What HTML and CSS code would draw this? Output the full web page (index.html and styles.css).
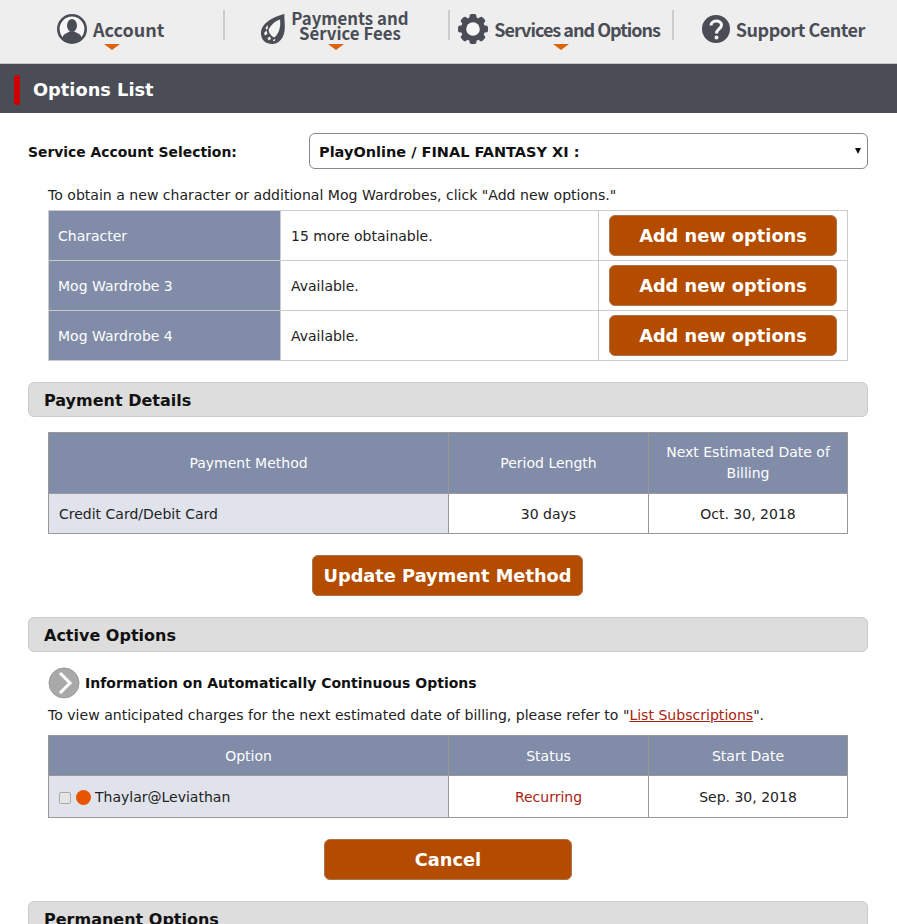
FILE: index.html
```html
<!DOCTYPE html>
<html lang="en">
<head>
    <meta charset="UTF-8">
    <meta name="viewport" content="width=device-width, initial-scale=1.0">
    <title>Options List</title>
    <link rel="stylesheet" href="styles.css">
</head>
<body>

<nav class="topnav">
    <a class="nav-item has-arrow">
        <svg class="nav-icon" width="30" height="30" viewBox="0 0 30 30">
            <circle cx="15" cy="15" r="13.700" fill="#f6f6f6" stroke="#4a4d55" stroke-width="2.600"/>
            <ellipse cx="15" cy="11.500" rx="5" ry="6.500" fill="#4a4d55"/>
            <path d="M5.500 24c.5-3 2-4 4.500-5l2.500-1.500h5L20 19c2.500 1 4 2 4.500 5a12 12 0 0 1-19 0z" fill="#4a4d55"/>
        </svg>
        <span>Account</span>
    </a>
    <a class="nav-item has-arrow">
        <svg class="nav-icon" width="24" height="30" viewBox="0 0 24 30">
            <path d="M23.500 0c-.5 3 .5 8 .3 14C23.500 24 18 30 11 30 5 30 0 26 0 19.500 0 9 12 3 23.500 0z" fill="#4a4d55"/>
            <path d="M19 5.500c1 7-1 14-5.500 18-3-1-5.500-4-6-7.500 2-5 6.500-9 11.500-10.500z" fill="#f2f2f2"/>
            <path d="M3 19l2.500-2.500 1 3.500-2.500 1.500zM6.500 24l2.500-1.500 1 2.500-2.500 1.500zM11.500 26l3-1-1 2.500zM4.500 14l2-3 .5 3-1.500 2z" fill="#f2f2f2"/>
        </svg>
        <span class="nav-two">Payments and<br>Service Fees</span>
    </a>
    <a class="nav-item has-arrow">
        <svg class="nav-icon" width="30" height="30" viewBox="0 0 30 30">
            <g fill="#4a4d55">
                <circle cx="15" cy="15" r="12"/>
                <rect x="11.500" y="0" width="7" height="6" rx="2"/>
                <rect x="11.500" y="0" width="7" height="6" rx="2" transform="rotate(45 15 15)"/>
                <rect x="11.500" y="0" width="7" height="6" rx="2" transform="rotate(90 15 15)"/>
                <rect x="11.500" y="0" width="7" height="6" rx="2" transform="rotate(135 15 15)"/>
                <rect x="11.500" y="0" width="7" height="6" rx="2" transform="rotate(180 15 15)"/>
                <rect x="11.500" y="0" width="7" height="6" rx="2" transform="rotate(225 15 15)"/>
                <rect x="11.500" y="0" width="7" height="6" rx="2" transform="rotate(270 15 15)"/>
                <rect x="11.500" y="0" width="7" height="6" rx="2" transform="rotate(315 15 15)"/>
            </g>
            <circle cx="15" cy="15" r="6.800" fill="#f6f6f6"/>
        </svg>
        <span class="nav-tight">Services and Options</span>
    </a>
    <a class="nav-item">
        <svg class="nav-icon" width="28" height="28" viewBox="0 0 28 28">
            <circle cx="14" cy="14" r="14" fill="#4a4d55"/>
            <path d="M9 10.500C9 4.500 19.500 4.500 19.500 10c0 4-5 4-5 8.500" fill="none" stroke="#f6f6f6" stroke-width="3"/>
            <circle cx="14.500" cy="22.500" r="2" fill="#f6f6f6"/>
        </svg>
        <span class="nav-support">Support Center</span>
    </a>
</nav>

<h1 class="page-title"><span class="title-mark"></span>Options List</h1>

<main class="content">
    <div class="account-row">
        <label class="account-label">Service Account Selection:</label>
        <div class="fake-select">PlayOnline / FINAL FANTASY XI :<span class="select-arrow"></span></div>
    </div>

    <p class="note">To obtain a new character or additional Mog Wardrobes, click "Add new options."</p>
    <table class="grid options-table">
        <tr>
            <th class="left">Character</th>
            <td>15 more obtainable.</td>
            <td class="btn-cell"><a class="btn btn-add">Add new options</a></td>
        </tr>
        <tr>
            <th class="left">Mog Wardrobe 3</th>
            <td>Available.</td>
            <td class="btn-cell"><a class="btn btn-add">Add new options</a></td>
        </tr>
        <tr>
            <th class="left">Mog Wardrobe 4</th>
            <td>Available.</td>
            <td class="btn-cell"><a class="btn btn-add">Add new options</a></td>
        </tr>
    </table>

    <h2 class="section-head">Payment Details</h2>
    <table class="grid wide-table payment-table">
        <tr class="head-row">
            <th>Payment Method</th>
            <th>Period Length</th>
            <th>Next Estimated Date of Billing</th>
        </tr>
        <tr class="body-row">
            <td class="shaded">Credit Card/Debit Card</td>
            <td class="center">30 days</td>
            <td class="center">Oct. 30, 2018</td>
        </tr>
    </table>
    <div class="btn-wrap"><a class="btn btn-update">Update Payment Method</a></div>

    <h2 class="section-head">Active Options</h2>
    <div class="info-link">
        <svg width="32" height="32" viewBox="0 0 32 32">
            <circle cx="16" cy="16" r="15" fill="#a9a9a9" stroke="#999"/>
            <path d="M12 6l10 10-10 10" fill="none" stroke="#fff" stroke-width="3"/>
        </svg>
        <span>Information on Automatically Continuous Options</span>
    </div>
    <p class="note charges">To view anticipated charges for the next estimated date of billing, please refer to "<a class="red-link">List Subscriptions</a>".</p>
    <table class="grid wide-table active-table">
        <tr class="head-row">
            <th>Option</th>
            <th>Status</th>
            <th>Start Date</th>
        </tr>
        <tr class="body-row">
            <td class="shaded"><span class="option-cell"><input type="checkbox" class="opt-check" disabled><span class="dot"></span>Thaylar@Leviathan</span></td>
            <td class="center recurring">Recurring</td>
            <td class="center">Sep. 30, 2018</td>
        </tr>
    </table>
    <div class="btn-wrap"><a class="btn btn-cancel">Cancel</a></div>

    <h2 class="section-head">Permanent Options</h2>
</main>

</body>
</html>
```

FILE: styles.css
```css
html, body {
    height: 924px;
    overflow: hidden;
}

body {
    margin: 0;
    background-color: white;
    color: #222;
    font-family: "DejaVu Sans", Verdana, sans-serif;
    font-size: 14px;
}

.topnav {
    display: flex;
    height: 63px;
    background-color: #eeeeee;
    border-bottom: 1px solid #c4c4c4;
}

.nav-item {
    position: relative;
    flex: 1;
    display: flex;
    align-items: center;
    justify-content: center;
    gap: 6px;
    box-sizing: border-box;
    height: 58px;
    padding-right: 3px;
    color: #4a4d55;
    font-family: "Noto Sans CJK JP", "Noto Sans", sans-serif;
    font-size: 18px;
    font-weight: 700;
}

.nav-item + .nav-item::before {
    content: "";
    position: absolute;
    left: -1px;
    top: 10px;
    width: 2px;
    height: 30px;
    background-color: #cccccc;
}

.has-arrow::after {
    content: "";
    position: absolute;
    left: 50%;
    top: 44px;
    margin-left: -8px;
    border-top: 6px solid #d9640b;
    border-left: 8px solid transparent;
    border-right: 8px solid transparent;
}

.nav-two {
    margin-bottom: 7px;
    font-size: 16.8px;
    line-height: 15px;
    text-align: center;
}

.nav-tight {
    letter-spacing: -1px;
}

.nav-support {
    letter-spacing: -0.5px;
}

.page-title {
    display: flex;
    align-items: center;
    box-sizing: border-box;
    height: 49px;
    margin: 0;
    padding: 2px 0 0 14px;
    background-color: #4a4d55;
    color: white;
    font-size: 17.8px;
    font-weight: bold;
}

.title-mark {
    width: 6px;
    height: 30px;
    margin-right: 13px;
    background-color: #cc0000;
    border-radius: 2px;
}

.content {
    padding: 20px 29px 0 28px;
}

.account-row {
    display: flex;
    align-items: center;
    justify-content: space-between;
}

.account-label {
    padding-top: 1px;
    font-size: 13.9px;
    font-weight: bold;
    color: #111;
}

.fake-select {
    position: relative;
    width: 548px;
    height: 34px;
    padding-left: 9px;
    border: 1px solid #888;
    border-radius: 6px;
    font-size: 14.5px;
    line-height: 36px;
    font-weight: bold;
    color: #111;
}

.select-arrow {
    position: absolute;
    right: 6px;
    top: 14px;
    border-top: 6px solid #111;
    border-left: 3px solid transparent;
    border-right: 3px solid transparent;
}

.note {
    margin: 18px 0 6px 20px;
    font-size: 14.07px;
    line-height: 17px;
}

.grid {
    width: 800px;
    margin-left: 20px;
    border-collapse: collapse;
    table-layout: fixed;
}

.grid th, .grid td {
    border: 1px solid #999;
    padding: 0 10px;
    font-weight: normal;
}

.grid th {
    background-color: #808ca8;
    color: white;
}

.options-table th, .options-table td {
    height: 49px;
    border-color: #ccc;
}

.options-table {
    border: 1px solid #888;
}

.options-table th.left {
    width: 212px;
    padding-left: 9px;
    text-align: left;
}

.options-table td:nth-child(2) {
    width: 297px;
}

.btn-cell {
    text-align: center;
}

.btn {
    display: inline-block;
    box-sizing: border-box;
    background-color: #b44c00;
    border: 1px solid #a9744f;
    border-radius: 6px;
    color: white;
    font-weight: bold;
    font-size: 17.8px;
    text-align: center;
}

.btn-add {
    display: block;
    width: 228px;
    height: 41px;
    line-height: 40px;
}

.section-head {
    box-sizing: border-box;
    height: 35px;
    margin: 21px 0 15px;
    padding-left: 15px;
    background-color: #dddddd;
    border: 1px solid #ccc;
    border-radius: 6px;
    color: #111;
    font-size: 16px;
    line-height: 35px;
}

.wide-table th:nth-child(1), .wide-table td:nth-child(1) {
    width: 379px;
}

.wide-table th:nth-child(2), .wide-table td:nth-child(2) {
    width: 179px;
}

.payment-table .head-row th {
    height: 60px;
    line-height: 21px;
}

.payment-table .body-row td {
    height: 39px;
}

.active-table .head-row th {
    height: 39px;
}

.active-table .body-row td {
    height: 41px;
}

.shaded {
    background-color: #e0e3ec;
}

.center {
    text-align: center;
}

.recurring {
    color: #aa2211;
}

.btn-wrap {
    display: flex;
    justify-content: center;
    margin-top: 21px;
}

.btn-update {
    width: 271px;
    height: 41px;
    margin-right: 1px;
    line-height: 40px;
}

.btn-cancel {
    width: 248px;
    height: 41px;
    line-height: 40px;
}

.info-link {
    display: flex;
    align-items: center;
    gap: 5px;
    margin-left: 20px;
    font-weight: bold;
    color: #111;
}

.charges {
    margin-top: 8px;
    margin-bottom: 11px;
}

.red-link {
    color: #aa2211;
    text-decoration: underline;
}

.option-cell {
    display: flex;
    align-items: center;
    line-height: 19px;
    padding-top: 2px;
}

.opt-check {
    appearance: none;
    box-sizing: border-box;
    width: 12px;
    height: 12px;
    margin: 0 5px 0 0;
    background-color: #e4e4e4;
    border: 1px solid #aaa;
    border-radius: 2px;
}

.dot {
    width: 15px;
    height: 15px;
    margin-right: 4px;
    background-color: #e85500;
    border-radius: 50%;
}
```
